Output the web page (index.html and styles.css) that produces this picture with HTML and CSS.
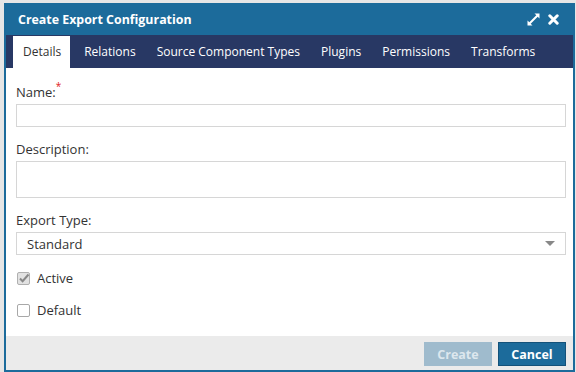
FILE: index.html
```html
<!DOCTYPE html>
<html>
<head>
<meta charset="utf-8">
<link rel="stylesheet" href="styles.css">
</head>
<body>
<div class="backdrop">
  <div class="dialog">
    <div class="header">
      <span class="title">Create Export Configuration</span>
      <span class="tools">
        <svg width="13" height="13" viewBox="0 0 13 13"><path d="M7.5 0.5H12.5V5.5L10.7 3.7 3.7 10.7 5.5 12.5H0.5V7.5L2.3 9.3 9.3 2.3Z" fill="#fff"/></svg>
        <svg width="11" height="11" viewBox="0 0 11 11"><path d="M1.8 1.8L9.2 9.2M9.2 1.8L1.8 9.2" stroke="#fff" stroke-width="3" stroke-linecap="round"/></svg>
      </span>
    </div>
    <div class="tabs">
      <span class="tab active">Details</span>
      <span class="tab">Relations</span>
      <span class="tab">Source Component Types</span>
      <span class="tab">Plugins</span>
      <span class="tab">Permissions</span>
      <span class="tab">Transforms</span>
    </div>
    <div class="body">
      <div class="group">
        <label class="label">Name:<sup class="req">*</sup></label>
        <div class="input"></div>
      </div>
      <div class="group">
        <label class="label">Description:</label>
        <div class="input textarea"></div>
      </div>
      <div class="group">
        <label class="label">Export Type:</label>
        <div class="input select"><span>Standard</span><span class="caret"></span></div>
      </div>
      <div class="check">
        <span class="box checked"><svg width="13" height="13" viewBox="0 0 13 13"><path d="M3 6.5L5.6 9.2 11.5 2.5" stroke="#888" stroke-width="2" fill="none"/></svg></span>
        <span>Active</span>
      </div>
      <div class="check">
        <span class="box"></span>
        <span>Default</span>
      </div>
    </div>
    <div class="footer">
      <span class="btn disabled">Create</span>
      <span class="btn primary">Cancel</span>
    </div>
  </div>
</div>
</body>
</html>
```
FILE: styles.css
```css
html, body {
  margin: 0;
  padding: 0;
}
body {
  background: #e6e6e6;
  font-family: "Open Sans", "Liberation Sans", sans-serif;
  font-size: 13px;
  color: #333;
  width: 576px;
  height: 372px;
  overflow: hidden;
}
.backdrop {
  padding: 3px 1px 0 4px;
}
.dialog {
  border: 2px solid #1c6b9b;
  border-top: 0;
  background: #fff;
  height: 369px;
  box-sizing: border-box;
  display: flex;
  flex-direction: column;
}
.header {
  background: #1c6b9b;
  height: 32px;
  flex: none;
  display: flex;
  align-items: center;
  justify-content: space-between;
  padding: 0 14px 0 12px;
  color: #fff;
}
.title {
  font-weight: bold;
  font-size: 12.4px;
}
.tools {
  display: flex;
  align-items: center;
  gap: 8px;
}
.tabs {
  background: #283864;
  height: 33px;
  flex: none;
  display: flex;
  align-items: flex-end;
  padding-left: 7px;
  white-space: nowrap;
  font-size: 12px;
}
.tab {
  flex: none;
  color: #fff;
  height: 32px;
  line-height: 32px;
  padding: 0 10px 0 11px;
}
.tab.active {
  background: #fff;
  color: #333;
  padding: 0 9px 0 10px;
  margin-right: 3px;
}
.body {
  flex: 1;
  padding: 15px 7px 0 10px;
}
.group {
  margin-bottom: 13px;
}
.label {
  display: block;
  line-height: 18px;
  margin-bottom: 3px;
}
.req {
  color: #e02020;
  font-size: 10px;
  vertical-align: top;
  line-height: 10px;
  position: relative;
  top: -2px;
}
.input {
  height: 23px;
  border: 1px solid #d6d6d6;
  box-sizing: border-box;
  background: #fff;
}
.textarea {
  height: 37px;
}
.select {
  display: flex;
  align-items: center;
  justify-content: space-between;
  padding: 0 10px 0 10px;
}
.caret {
  width: 0;
  height: 0;
  border-left: 5px solid transparent;
  border-right: 5px solid transparent;
  border-top: 5px solid #888;
}
.check {
  display: flex;
  align-items: center;
  gap: 7px;
  height: 20px;
  margin-top: 12px;
  padding-left: 1px;
}
.check + .check {
  margin-top: 12px;
}
.box {
  width: 11px;
  height: 11px;
  border: 1px solid #a8a8a8;
  border-radius: 2px;
  background: #fff;
  display: flex;
  align-items: center;
  justify-content: center;
}
.box.checked {
  background: #e2e2e2;
  border-color: #b0b0b0;
}
.box svg {
  flex: none;
}
.footer {
  background: #ebebeb;
  height: 34px;
  flex: none;
  display: flex;
  align-items: flex-end;
  justify-content: flex-end;
  gap: 6px;
  padding: 0 7px 4px 0;
  box-sizing: border-box;
}
.btn {
  height: 24px;
  width: 68px;
  box-sizing: border-box;
  display: flex;
  align-items: center;
  justify-content: center;
  font-weight: bold;
  font-size: 12.5px;
}
.btn.disabled {
  background: #9fbbcd;
  color: #dde7ee;
}
.btn.primary {
  background: #1c6b9b;
  border: 1px solid #14527a;
  color: #fff;
}
```
